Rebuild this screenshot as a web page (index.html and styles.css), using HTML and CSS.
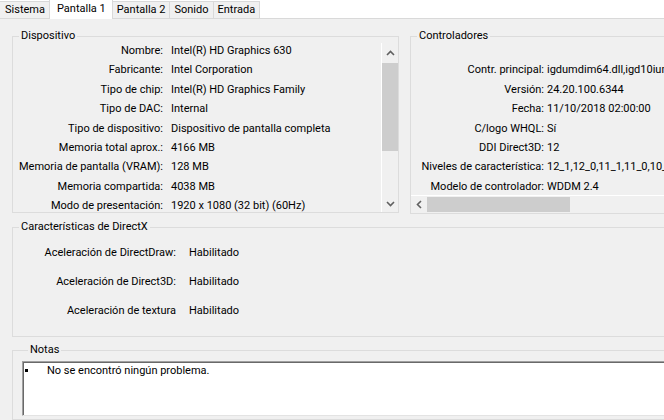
FILE: index.html
```html
<!DOCTYPE html>
<html lang="es">
<head>
    <meta charset="UTF-8">
    <meta name="viewport" content="width=device-width, initial-scale=1.0">
    <title>Herramienta de diagnóstico de DirectX</title>
    <link rel="stylesheet" href="styles.css">
</head>
<body>
    <!-- Tabs -->
    <div class="tabs">
        <div class="tab">Sistema</div>
        <div class="tab active">Pantalla 1</div>
        <div class="tab">Pantalla 2</div>
        <div class="tab">Sonido</div>
        <div class="tab">Entrada</div>
    </div>

    <div class="panel">
        <div class="top-row">
            <!-- Dispositivo -->
            <fieldset class="group device">
                <legend>Dispositivo</legend>
                <div class="list-box">
                    <div class="info-list device-list">
                        <span class="label">Nombre:</span><span>Intel(R) HD Graphics 630</span>
                        <span class="label">Fabricante:</span><span>Intel Corporation</span>
                        <span class="label">Tipo de chip:</span><span>Intel(R) HD Graphics Family</span>
                        <span class="label">Tipo de DAC:</span><span>Internal</span>
                        <span class="label">Tipo de dispositivo:</span><span>Dispositivo de pantalla completa</span>
                        <span class="label">Memoria total aprox.:</span><span>4166 MB</span>
                        <span class="label">Memoria de pantalla (VRAM):</span><span>128 MB</span>
                        <span class="label">Memoria compartida:</span><span>4038 MB</span>
                        <span class="label">Modo de presentación:</span><span>1920 x 1080 (32 bit) (60Hz)</span>
                    </div>
                    <div class="vscroll">
                        <div class="arrow-btn up">
                            <svg width="9" height="6" viewBox="0 0 9 6"><polyline points="1,5 4.5,1.5 8,5" fill="none" stroke="#606060" stroke-width="1.6"/></svg>
                        </div>
                        <div class="vthumb"></div>
                        <div class="arrow-btn down">
                            <svg width="9" height="6" viewBox="0 0 9 6"><polyline points="1,1 4.5,4.5 8,1" fill="none" stroke="#606060" stroke-width="1.6"/></svg>
                        </div>
                    </div>
                </div>
            </fieldset>

            <!-- Controladores -->
            <fieldset class="group drivers">
                <legend>Controladores</legend>
                <div class="drivers-box">
                    <div class="info-list driver-list">
                        <span class="label">Contr. principal:</span><span>igdumdim64.dll,igd10iumd64.dll,igd10iumd64.dll,igd12umd64.dll</span>
                        <span class="label">Versión:</span><span>24.20.100.6344</span>
                        <span class="label">Fecha:</span><span>11/10/2018 02:00:00</span>
                        <span class="label">C/logo WHQL:</span><span>Sí</span>
                        <span class="label">DDI Direct3D:</span><span>12</span>
                        <span class="label">Niveles de característica:</span><span>12_1,12_0,11_1,11_0,10_1,10_0,9_3,9_2,9_1</span>
                        <span class="label">Modelo de controlador:</span><span>WDDM 2.4</span>
                    </div>
                    <div class="hscroll">
                        <div class="arrow-btn left">
                            <svg width="6" height="9" viewBox="0 0 6 9"><polyline points="5,1 1.5,4.5 5,8" fill="none" stroke="#606060" stroke-width="1.6"/></svg>
                        </div>
                        <div class="hthumb"></div>
                    </div>
                </div>
            </fieldset>
        </div>

        <!-- Características de DirectX -->
        <fieldset class="group features">
            <legend>Características de DirectX</legend>
            <div class="info-list feature-list">
                <span class="label">Aceleración de DirectDraw:</span><span>Habilitado</span>
                <span class="label">Aceleración de Direct3D:</span><span>Habilitado</span>
                <span class="label">Aceleración de textura</span><span>Habilitado</span>
            </div>
        </fieldset>

        <!-- Notas -->
        <fieldset class="group notes">
            <legend>Notas</legend>
            <div class="notes-box">
                <div class="note"><span class="bullet"></span>No se encontró ningún problema.</div>
            </div>
        </fieldset>
    </div>
</body>
</html>
```

FILE: styles.css
```css
* {
    margin: 0;
    padding: 0;
    box-sizing: border-box;
}
html, body {
    width: 664px;
    height: 420px;
    overflow: hidden;
}
body {
    background-color: #f0f0f0;
    color: #000;
    font-family: Roboto, "Liberation Sans", sans-serif;
    font-size: 11px;
    line-height: 15px;
}
/* Tabs */
.tabs {
    display: flex;
    align-items: flex-end;
    height: 19px;
    background-color: #ffffff;
    border-bottom: 1px solid #d9d9d9;
}
.tab {
    height: 17px;
    padding: 0 4px;
    line-height: 16px;
    background-color: #f0f0f0;
    border: 1px solid #d9d9d9;
    border-bottom: none;
    margin-left: -1px;
    white-space: nowrap;
}
.tab:first-child {
    margin-left: 0;
    border-left: none;
    padding-left: 5px;
}
.tab.active {
    height: 20px;
    margin-bottom: -1px;
    padding: 0 6px 0 7px;
    line-height: 18px;
    background-color: #ffffff;
    position: relative;
    z-index: 1;
}
/* Panel */
.panel {
    width: 700px;
    padding: 10px 0 0 12px;
}
.top-row {
    display: flex;
    gap: 11px;
    align-items: flex-start;
}
.group {
    border: 1px solid #dcdcdc;
    min-width: 0;
}
.group legend {
    margin-left: 6px;
    padding: 0 2px;
    line-height: 14px;
}
.info-list {
    display: grid;
    row-gap: 4.4px;
    white-space: nowrap;
}
.label {
    text-align: right;
}
/* Dispositivo */
.device {
    width: 387px;
}
.list-box {
    display: flex;
    height: 169px;
}
.device-list {
    flex: 1;
    grid-template-columns: 150px 1fr;
    column-gap: 8px;
    align-content: start;
    overflow: hidden;
}
.vscroll {
    width: 17px;
    border-left: 1px solid #ffffff;
    display: flex;
    flex-direction: column;
}
.arrow-btn {
    display: flex;
    justify-content: center;
    align-items: center;
}
.arrow-btn.up {
    height: 20px;
}
.vthumb {
    height: 88px;
    background-color: #cdcdcd;
}
.arrow-btn.down {
    height: 17px;
    margin-top: auto;
}
/* Controladores */
.drivers {
    flex: 1;
}
.drivers-box {
    display: flex;
    flex-direction: column;
    height: 170px;
}
.driver-list {
    flex: 1;
    grid-template-columns: 133px 1fr;
    column-gap: 3px;
    align-content: start;
    padding-top: 19.4px;
    overflow: hidden;
}
.hscroll {
    height: 18px;
    border-top: 1px solid #ffffff;
    display: flex;
}
.arrow-btn.left {
    width: 16px;
}
.hthumb {
    width: 143px;
    margin: 1px 0;
    background-color: #cdcdcd;
}
/* Características de DirectX */
.features {
    margin-top: 6px;
}
.feature-list {
    grid-template-columns: 163px 1fr;
    column-gap: 13px;
    row-gap: 14px;
    padding: 11px 0 18px;
}
/* Notas */
.notes {
    margin-top: 6px;
    padding: 4px 0 3px 9px;
}
.notes-box {
    height: 55px;
    background-color: #ffffff;
    border: 1px solid;
    border-color: #a0a0a0 #ffffff #e3e3e3 #a0a0a0;
    box-shadow: inset 1px 1px 0 #696969;
    padding: 1px 0 0 2px;
}
.note {
    display: flex;
    align-items: center;
}
.bullet {
    width: 3px;
    height: 3px;
    background-color: #000;
    margin-right: 19px;
}
```
